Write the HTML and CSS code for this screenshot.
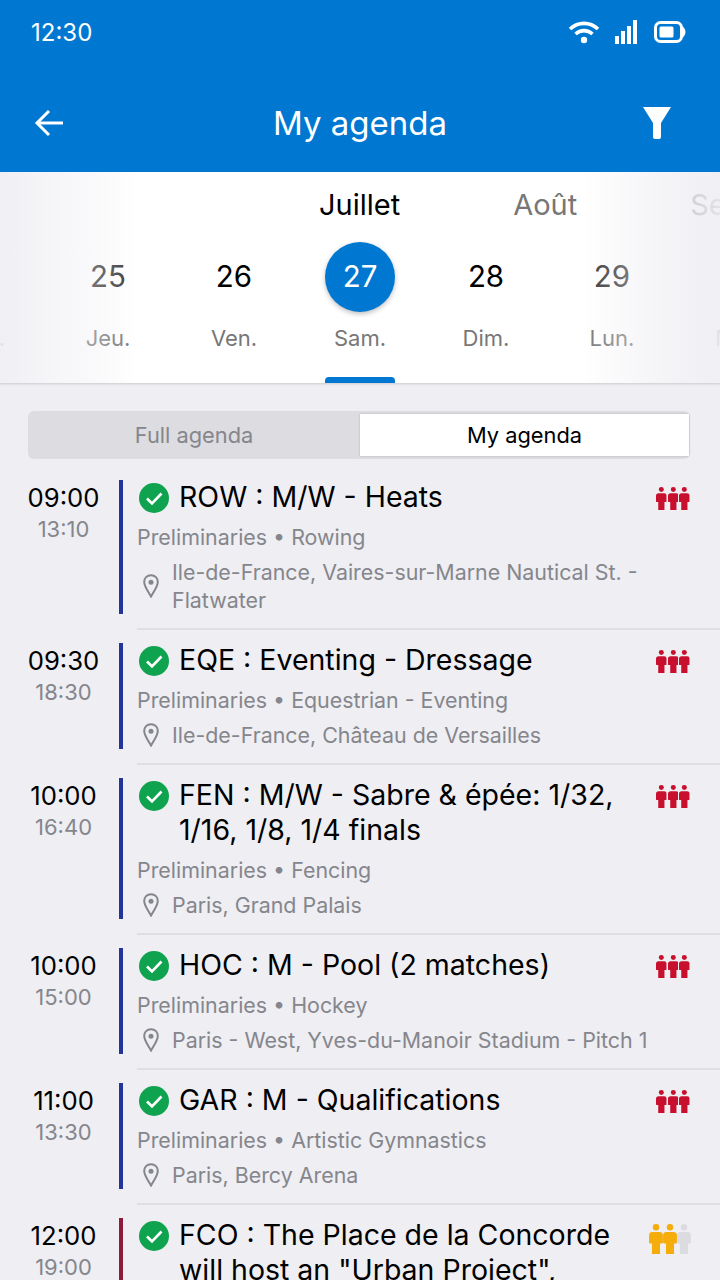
FILE: index.html

```html
<!DOCTYPE html>
<html lang="en">
<head>
  <meta charset="UTF-8">
  <meta name="viewport" content="width=device-width, initial-scale=1.0">
  <title>My agenda</title>
  <link rel="stylesheet" href="styles.css">
</head>
<body>
  <svg class="defs" width="0" height="0">
    <symbol id="person" viewBox="0 0 12 26">
      <circle cx="6" cy="2.800" r="2.800"/>
      <path d="M3 7h6q3 0 3 3v6q0 1-1 1H9.500v9h-7v-9H1q-1 0-1-1v-6q0-3 3-3z"/>
    </symbol>
    <symbol id="check" viewBox="0 0 30 30">
      <circle cx="15" cy="15" r="15" fill="#0fa24f"/>
      <path d="M8 15.500l5 5 9.500-10" fill="none" stroke="#fff" stroke-width="2.600"/>
    </symbol>
    <symbol id="pin" viewBox="0 0 16 24">
      <path d="M8 1.200C3.900 1.200 1.200 4.200 1.200 8c0 4.500 4.400 10 6.800 14.500C10.400 18 14.800 12.500 14.800 8c0-3.800-2.700-6.800-6.800-6.800z" fill="none" stroke="#85868c" stroke-width="2"/>
      <circle cx="8" cy="8.200" r="2.500" fill="#85868c"/>
    </symbol>
  </svg>

  <div class="screen">
    <header class="header">
      <div class="status">
        <span class="clock">12:30</span>
        <div class="status-icons">
          <svg width="32" height="24" viewBox="0 0 32 24" fill="none" stroke="#fff" stroke-width="3.600">
            <path d="M2 9c8-7.500 20-7.500 28 0"/>
            <path d="M7.500 14c5-4.500 12-4.500 17 0"/>
            <circle cx="16" cy="20" r="3.200" fill="#fff" stroke="none"/>
          </svg>
          <svg width="24" height="25" viewBox="0 0 24 25" fill="#fff">
            <rect x="0" y="16" width="4" height="8"/>
            <rect x="6" y="11" width="4" height="13"/>
            <rect x="12" y="6" width="4" height="18"/>
            <rect x="18" y="0" width="4" height="24"/>
          </svg>
          <svg width="32" height="22" viewBox="0 0 32 22">
            <rect x="1.500" y="1.500" width="26" height="19" rx="5" fill="none" stroke="#fff" stroke-width="3"/>
            <rect x="5.500" y="5.500" width="14" height="11" rx="1.500" fill="#fff"/>
            <path d="M29.500 7.500q2.500 3.500 0 7z" fill="#fff" stroke="#fff" stroke-width="1.500"/>
          </svg>
        </div>
      </div>
      <div class="appbar">
        <svg width="30" height="30" viewBox="0 0 30 30" fill="none" stroke="#fff" stroke-width="3">
          <path d="M29 15H3"/>
          <path d="M15 3L3 15l12 12"/>
        </svg>
        <h1 class="appbar-title">My agenda</h1>
        <svg class="appbar-filter" width="30" height="34" viewBox="0 0 30 34" fill="#fff">
          <path d="M1 1h28L19 17v14q0 2-2 2h-4q-2 0-2-2V17z"/>
        </svg>
      </div>
    </header>

    <section class="calendar">
      <div class="months">
        <span class="month active">Juillet</span>
        <span class="month">Août</span>
        <span class="month">Septembre</span>
      </div>
      <div class="days">
        <div class="day"><span class="num muted">24</span><span class="name">Mer.</span></div>
        <div class="day"><span class="num muted">25</span><span class="name">Jeu.</span></div>
        <div class="day"><span class="num">26</span><span class="name">Ven.</span></div>
        <div class="day selected"><span class="num">27</span><span class="name">Sam.</span></div>
        <div class="day"><span class="num">28</span><span class="name">Dim.</span></div>
        <div class="day"><span class="num muted">29</span><span class="name">Lun.</span></div>
        <div class="day"><span class="num muted">30</span><span class="name">Mar.</span></div>
      </div>
      <div class="indicator"></div>
      <div class="fade"></div>
    </section>

    <div class="segment">
      <div class="segment-btn">Full agenda</div>
      <div class="segment-btn on">My agenda</div>
    </div>

    <div class="list">
      <div class="item">
        <div class="times"><div class="start">09:00</div><div class="end">13:10</div></div>
        <div class="bar"></div>
        <div class="body">
          <div class="title-row">
            <svg class="check"><use href="#check"/></svg>
            <div class="title">ROW : M/W - Heats</div>
            <div class="people red"><svg><use href="#person"/></svg><svg><use href="#person"/></svg><svg><use href="#person"/></svg></div>
          </div>
          <div class="meta">Preliminaries • Rowing</div>
          <div class="place">
            <svg class="pin"><use href="#pin"/></svg>
            <div class="place-text">Ile-de-France, Vaires-sur-Marne Nautical St. - Flatwater</div>
          </div>
        </div>
      </div>

      <div class="item">
        <div class="times"><div class="start">09:30</div><div class="end">18:30</div></div>
        <div class="bar"></div>
        <div class="body">
          <div class="title-row">
            <svg class="check"><use href="#check"/></svg>
            <div class="title">EQE : Eventing - Dressage</div>
            <div class="people red"><svg><use href="#person"/></svg><svg><use href="#person"/></svg><svg><use href="#person"/></svg></div>
          </div>
          <div class="meta">Preliminaries • Equestrian - Eventing</div>
          <div class="place">
            <svg class="pin"><use href="#pin"/></svg>
            <div class="place-text">Ile-de-France, Château de Versailles</div>
          </div>
        </div>
      </div>

      <div class="item">
        <div class="times"><div class="start">10:00</div><div class="end">16:40</div></div>
        <div class="bar"></div>
        <div class="body">
          <div class="title-row">
            <svg class="check"><use href="#check"/></svg>
            <div class="title">FEN : M/W - Sabre &amp; épée: 1/32, 1/16, 1/8, 1/4 finals</div>
            <div class="people red"><svg><use href="#person"/></svg><svg><use href="#person"/></svg><svg><use href="#person"/></svg></div>
          </div>
          <div class="meta">Preliminaries • Fencing</div>
          <div class="place">
            <svg class="pin"><use href="#pin"/></svg>
            <div class="place-text">Paris, Grand Palais</div>
          </div>
        </div>
      </div>

      <div class="item">
        <div class="times"><div class="start">10:00</div><div class="end">15:00</div></div>
        <div class="bar"></div>
        <div class="body">
          <div class="title-row">
            <svg class="check"><use href="#check"/></svg>
            <div class="title">HOC : M - Pool (2 matches)</div>
            <div class="people red"><svg><use href="#person"/></svg><svg><use href="#person"/></svg><svg><use href="#person"/></svg></div>
          </div>
          <div class="meta">Preliminaries • Hockey</div>
          <div class="place">
            <svg class="pin"><use href="#pin"/></svg>
            <div class="place-text">Paris - West, Yves-du-Manoir Stadium - Pitch 1</div>
          </div>
        </div>
      </div>

      <div class="item">
        <div class="times"><div class="start">11:00</div><div class="end">13:30</div></div>
        <div class="bar"></div>
        <div class="body">
          <div class="title-row">
            <svg class="check"><use href="#check"/></svg>
            <div class="title">GAR : M - Qualifications</div>
            <div class="people red"><svg><use href="#person"/></svg><svg><use href="#person"/></svg><svg><use href="#person"/></svg></div>
          </div>
          <div class="meta">Preliminaries • Artistic Gymnastics</div>
          <div class="place">
            <svg class="pin"><use href="#pin"/></svg>
            <div class="place-text">Paris, Bercy Arena</div>
          </div>
        </div>
      </div>

      <div class="item">
        <div class="times"><div class="start">12:00</div><div class="end">19:00</div></div>
        <div class="bar maroon"></div>
        <div class="body">
          <div class="title-row">
            <svg class="check"><use href="#check"/></svg>
            <div class="title">FCO : The Place de la Concorde will host an "Urban Project",</div>
            <div class="people amber"><svg><use href="#person"/></svg><svg><use href="#person"/></svg><svg class="off"><use href="#person"/></svg></div>
          </div>
        </div>
      </div>
    </div>
  </div>
</body>
</html>
```

FILE: styles.css

```css
* { box-sizing: border-box; }
html, body { margin: 0; padding: 0; }
body { font-family: Inter, "Liberation Sans", sans-serif; background-color: #eeeef3; color: #000; }
.defs { position: absolute; }
.screen { width: 720px; height: 1280px; overflow: hidden; }

.header { background-color: #0078d2; color: #fff; height: 172px; }
.status { height: 64px; padding: 0 34px 0 31px; display: flex; align-items: center; justify-content: space-between; }
.clock { font-size: 24px; }
.status-icons { display: flex; align-items: center; gap: 15px; }
.appbar { height: 108px; padding: 9px 34px 0; display: grid; grid-template-columns: 1fr auto 1fr; align-items: center; }
.appbar-title { margin: 0; font-size: 33px; font-weight: 400; }
.appbar-filter { justify-self: end; margin-right: 14px; }

.calendar { position: relative; height: 211px; background-color: #fff; overflow: hidden; box-shadow: 0 1px 2px rgba(0,0,0,0.15); }
.months { display: flex; gap: 113px; padding: 15px 0 0 319px; height: 70px; font-size: 29px; color: #777; white-space: nowrap; }
.month.active { color: #000; }
.days { display: flex; justify-content: center; }
.day { flex: none; width: 126px; display: flex; flex-direction: column; align-items: center; }
.num { width: 70px; height: 70px; padding-bottom: 2px; border-radius: 50%; display: flex; align-items: center; justify-content: center; font-size: 29.500px; }
.num.muted { color: #333; }
.name { margin-top: 10px; font-size: 22px; line-height: 32px; color: #777; }
.day.selected .num { background-color: #0078d2; color: #fff; box-shadow: 0 2px 5px rgba(0,0,0,0.25); }
.indicator { position: absolute; left: 325px; bottom: 0; width: 70px; height: 6px; background-color: #0078d2; border-radius: 4px 4px 0 0; }
.fade { position: absolute; inset: 0; pointer-events: none; background: linear-gradient(to right, rgba(238,238,243,0.9) 0, rgba(238,238,243,0.5) 60px, rgba(238,238,243,0.3) 100px, rgba(238,238,243,0) 140px, rgba(238,238,243,0) 580px, rgba(238,238,243,0.3) 620px, rgba(238,238,243,0.6) 660px, rgba(238,238,243,0.9) 720px); }

.segment { margin: 28px 30px 21px 28px; height: 48px; padding: 3px 1px 3px 0; display: flex; background-color: #dcdce1; border-radius: 6px; }
.segment-btn { flex: none; width: 332px; padding-bottom: 1px; display: flex; align-items: center; justify-content: center; font-size: 21.800px; color: #85868c; }
.segment-btn.on { width: 329px; background-color: #fff; color: #000; box-shadow: 0 0 2px rgba(0,0,0,0.2); }

.item { display: flex; padding-top: 13px; }
.item:first-child { padding-top: 0; }
.times { flex: none; width: 99px; margin-left: 14px; text-align: center; }
.start { font-size: 25.700px; line-height: 35px; }
.end { font-size: 22px; line-height: 28px; color: #85868c; }
.bar { flex: none; width: 4px; margin: 0 14px 16px 6px; background-color: #23349a; }
.bar.maroon { background-color: #8e1a3c; }
.body { flex: 1; min-width: 0; padding-bottom: 14px; border-bottom: 2px solid #dedee3; }
.title-row { display: flex; align-items: flex-start; }
.check { flex: none; width: 30px; height: 30px; margin: 3px 10px 0 2px; }
.title { width: 470px; margin: -1px 0 1px; font-size: 28.500px; line-height: 35px; }
.people { flex: none; display: flex; gap: 1px; margin: 6px 0 0 7px; }
.people svg { width: 10.700px; height: 25px; }
.people.red { fill: #c8102e; }
.people.amber { gap: 0; margin-left: 0; fill: #f5ad0c; }
.people.amber svg { width: 14px; height: 30px; }
.people svg.off { fill: #dcdce0; }
.meta { margin-top: 8px; font-size: 21.400px; line-height: 28px; color: #85868c; }
.place { display: flex; align-items: center; margin-top: 7px; }
.pin { flex: none; width: 16px; height: 24px; margin: 0 13px 0 6px; }
.place-text { width: 480px; font-size: 21.400px; line-height: 28px; color: #85868c; }
```
